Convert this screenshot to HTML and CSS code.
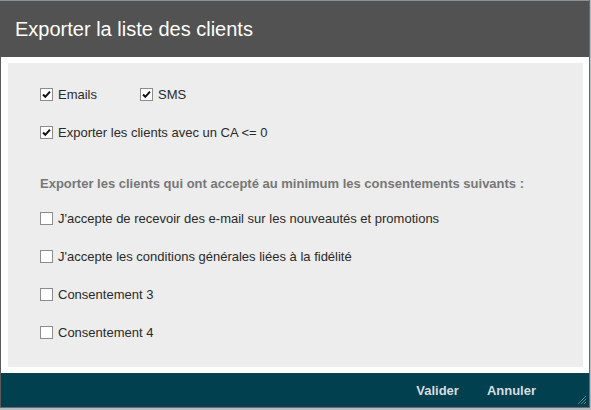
FILE: index.html
```html
<!DOCTYPE html>
<html lang="fr">
<head>
<meta charset="UTF-8">
<meta name="viewport" content="width=device-width, initial-scale=1.0">
<title>Exporter la liste des clients</title>
<link rel="stylesheet" href="styles.css">
</head>
<body>
<div class="dialog">
    <div class="dialog-header">Exporter la liste des clients</div>
    <div class="dialog-body">
        <div class="panel">
            <div class="row inline">
                <label class="check"><span class="box checked"><svg viewBox="0 0 11 11"><path d="M2 5.5 L4.3 7.8 L9 2.6" /></svg></span>Emails</label>
                <label class="check"><span class="box checked"><svg viewBox="0 0 11 11"><path d="M2 5.5 L4.3 7.8 L9 2.6" /></svg></span>SMS</label>
            </div>
            <div class="row">
                <label class="check"><span class="box checked"><svg viewBox="0 0 11 11"><path d="M2 5.5 L4.3 7.8 L9 2.6" /></svg></span>Exporter les clients avec un CA &lt;= 0</label>
            </div>
            <div class="section-title">Exporter les clients qui ont accepté au minimum les consentements suivants :</div>
            <div class="row">
                <label class="check"><span class="box"></span>J'accepte de recevoir des e-mail sur les nouveautés et promotions</label>
            </div>
            <div class="row">
                <label class="check"><span class="box"></span>J'accepte les conditions générales liées à la fidélité</label>
            </div>
            <div class="row">
                <label class="check"><span class="box"></span>Consentement 3</label>
            </div>
            <div class="row">
                <label class="check"><span class="box"></span>Consentement 4</label>
            </div>
        </div>
    </div>
    <div class="dialog-footer">
        <button class="action">Valider</button>
        <button class="action">Annuler</button>
        <svg class="grip" viewBox="0 0 10 10"><path d="M9 1 L1 9 M9 4 L4 9 M9 7 L7 9" /></svg>
    </div>
</div>
</body>
</html>
```

FILE: styles.css
```css
body {
    margin: 0;
    background: #b8bcc0;
    font-family: 'Liberation Sans', Arial, sans-serif;
}

.dialog {
    width: 589px;
    height: 407px;
    background: #ffffff;
    border-right: 1px solid #6b6b6b;
    border-bottom: 1px solid #6b6b6b;
    display: flex;
    flex-direction: column;
}

.dialog-header {
    height: 57px;
    box-sizing: border-box;
    background: #525252;
    border-top: 1px solid #8c9094;
    color: #ffffff;
    font-size: 20px;
    padding: 17px 0 0 15px;
}

.dialog-body {
    flex: 1;
    padding: 6px 6px 6px 7px;
    border-left: 1px solid #5a5a5a;
}

.panel {
    height: 100%;
    box-sizing: border-box;
    background: #ededed;
    padding: 25px 0 0 32px;
    font-size: 13px;
    color: #2a2a2a;
}

.row {
    height: 13px;
    display: flex;
    align-items: center;
    margin-bottom: 25px;
}

.row.inline {
    gap: 43px;
}

.check {
    display: flex;
    align-items: center;
    line-height: 13px;
}

.box {
    width: 11px;
    height: 11px;
    border: 1px solid #8c8c8c;
    background: #ffffff;
    margin-right: 5px;
    display: flex;
}

.box svg {
    width: 11px;
    height: 11px;
    fill: none;
    stroke: #111;
    stroke-width: 2;
}

.section-title {
    font-weight: bold;
    color: #777777;
    margin: 38px 0 22px;
    line-height: 13px;
}

.dialog-footer {
    height: 34px;
    background: #01404f;
    border-left: 1px solid #5a5a5a;
    display: flex;
    justify-content: flex-end;
    align-items: center;
    gap: 28px;
    padding-right: 53px;
    position: relative;
}

.action {
    background: none;
    border: none;
    padding: 0;
    font-family: inherit;
    font-size: 13px;
    font-weight: bold;
    color: #d6dde0;
    cursor: pointer;
}

.grip {
    position: absolute;
    right: 2px;
    bottom: 2px;
    width: 10px;
    height: 10px;
    stroke: #5d8290;
    stroke-width: 1;
}
```
